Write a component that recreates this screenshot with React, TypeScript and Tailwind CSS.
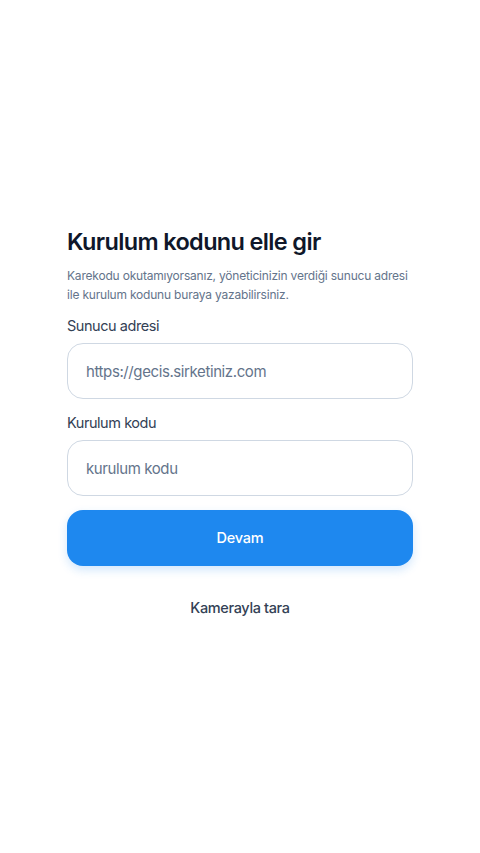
import React, { useState } from 'react';

const App: React.FC = () => {
  const [server, setServer] = useState('');
  const [code, setCode] = useState('');

  return (
    <div className="min-h-screen bg-white flex flex-col justify-center px-[67px] font-['Inter',sans-serif]">
      <div className="flex flex-col pb-[8px]">
        <h1 className="text-[23.5px] leading-[30px] font-semibold text-[#0f172a] tracking-[-0.65px]">Kurulum kodunu elle gir</h1>
        <p className="mt-[9px] text-[12px] leading-[19px] text-[#64748b] tracking-[-0.2px]">
          Karekodu okutamıyorsanız, yöneticinizin verdiği sunucu adresi ile kurulum kodunu buraya yazabilirsiniz.
        </p>

        <label className="mt-[12px] text-[14.5px] leading-[20px] text-[#334155] tracking-[-0.45px]">Sunucu adresi</label>
        <input
          value={server}
          onChange={(e) => setServer(e.target.value)}
          placeholder="https://gecis.sirketiniz.com"
          className="mt-[7px] h-[56px] w-full rounded-[16px] border border-[#cfd8e3] px-[18px] text-[15px] tracking-[-0.4px] text-[#0f172a] placeholder:text-[#64748b] outline-none"
        />

        <label className="mt-[14px] text-[14.5px] leading-[20px] text-[#334155] tracking-[-0.45px]">Kurulum kodu</label>
        <input
          value={code}
          onChange={(e) => setCode(e.target.value)}
          placeholder="kurulum kodu"
          className="mt-[7px] h-[56px] w-full rounded-[16px] border border-[#cfd8e3] px-[18px] text-[15px] tracking-[-0.4px] text-[#0f172a] placeholder:text-[#64748b] outline-none"
        />

        <button className="mt-[14px] h-[56px] w-full rounded-[16px] bg-[#1e88ef] text-white text-[14.5px] font-medium tracking-[-0.2px] shadow-[0_4px_10px_rgba(30,136,239,0.2)]">
          Devam
        </button>

        <button className="mt-[32px] self-center text-[14.5px] leading-[20px] text-[#334155] font-medium tracking-[-0.35px]">
          Kamerayla tara
        </button>
      </div>
    </div>
  );
};

export default App;
